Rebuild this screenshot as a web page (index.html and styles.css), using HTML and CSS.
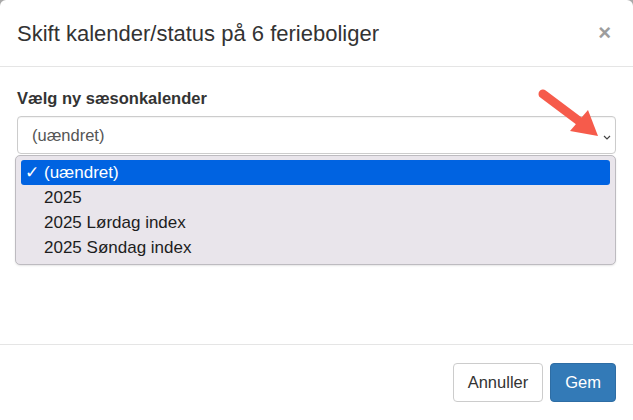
FILE: index.html
```html
<!DOCTYPE html>
<html lang="da">
<head>
<meta charset="utf-8">
<title>Skift kalender/status</title>
<link rel="stylesheet" href="styles.css">
</head>
<body>
<div class="modal">
  <div class="modal-header">
    <h4 class="modal-title">Skift kalender/status på 6 ferieboliger</h4>
    <span class="close">×</span>
  </div>
  <div class="modal-body">
    <div class="form-group">
      <label class="label">Vælg ny sæsonkalender</label>
      <div class="select">
        <span class="select-text">(uændret)</span>
        <svg class="chevron" width="8" height="5" viewBox="0 0 8 5"><polyline points="1,1 4,4 7,1" fill="none" stroke="#444" stroke-width="1.2"/></svg>
      </div>
    </div>
    <div class="dropdown">
      <div class="option selected"><span class="check">✓</span>(uændret)</div>
      <div class="option">2025</div>
      <div class="option">2025 Lørdag index</div>
      <div class="option">2025 Søndag index</div>
    </div>
    <svg class="arrow" width="633" height="420" viewBox="0 0 633 420">
      <line x1="543" y1="94" x2="583" y2="124" stroke="#f65b4b" stroke-width="9" stroke-linecap="round"/>
      <polygon points="598,136 570,131 588,110" fill="#f65b4b"/>
    </svg>
  </div>
  <div class="modal-footer">
    <button class="btn btn-default">Annuller</button>
    <button class="btn btn-primary">Gem</button>
  </div>
</div>
</body>
</html>
```
FILE: styles.css
```css
html { background: #a9a9a9; }
body {
  margin: 0;
  font-family: "Liberation Sans", Arial, sans-serif;
  color: #333;
}
.modal {
  background: #fff;
  border-radius: 6px 6px 0 0;
  height: 420px;
  display: flex;
  flex-direction: column;
  position: relative;
}
.modal-header {
  display: flex;
  align-items: center;
  justify-content: space-between;
  height: 67px;
  padding: 0 22px 0 17px;
  border-bottom: 1px solid #e5e5e5;
  box-sizing: border-box;
}
.modal-title {
  margin: 0;
  font-size: 22px;
  font-weight: normal;
  color: #333;
  padding-top: 2px;
}
.close {
  font-size: 22px;
  font-weight: bold;
  color: #9d9d9d;
  line-height: 1;
}
.modal-body {
  flex: 1;
  padding: 21px 17px 0 17px;
}
.label {
  display: block;
  font-size: 16.5px;
  font-weight: bold;
  line-height: 21px;
  margin-bottom: 7px;
}
.select {
  height: 38px;
  border: 1px solid #ccc;
  border-radius: 4px;
  box-sizing: border-box;
  display: flex;
  align-items: center;
  justify-content: space-between;
  padding: 0 4px 0 14px;
  box-shadow: inset 0 1px 1px rgba(0,0,0,0.05);
}
.select-text {
  font-size: 16.5px;
  color: #555;
}
.chevron { margin-top: 4px; }
.dropdown {
  position: absolute;
  top: 155px;
  left: 15px;
  width: 601px;
  height: 110px;
  box-sizing: border-box;
  background: #e9e5eb;
  border: 1px solid #bdbbc0;
  border-radius: 5px;
  padding: 4px 5px;
  box-shadow: 0 1px 2px rgba(0,0,0,0.1);
}
.option {
  height: 25px;
  line-height: 25px;
  font-size: 17px;
  color: #1d1d1d;
  padding-left: 23px;
  position: relative;
  border-radius: 3px;
}
.option.selected {
  background: #0063e1;
  color: #fff;
}
.check {
  position: absolute;
  left: 4px;
  top: 0;
  font-size: 17px;
}
.arrow {
  position: absolute;
  top: 0;
  left: 0;
  pointer-events: none;
}
.modal-footer {
  border-top: 1px solid #e5e5e5;
  padding: 18px 17px;
  display: flex;
  justify-content: flex-end;
  gap: 7px;
}
.btn {
  font-family: "Liberation Sans", Arial, sans-serif;
  font-size: 16.5px;
  line-height: 19px;
  padding: 9px 15px;
  border-radius: 4px;
  border: 1px solid #ccc;
  background: #fff;
  color: #333;
}
.btn-default { padding: 9px 14px; }
.btn-primary {
  background: #337ab7;
  border-color: #2e6da4;
  color: #fff;
  padding: 9px 14px;
}
```
